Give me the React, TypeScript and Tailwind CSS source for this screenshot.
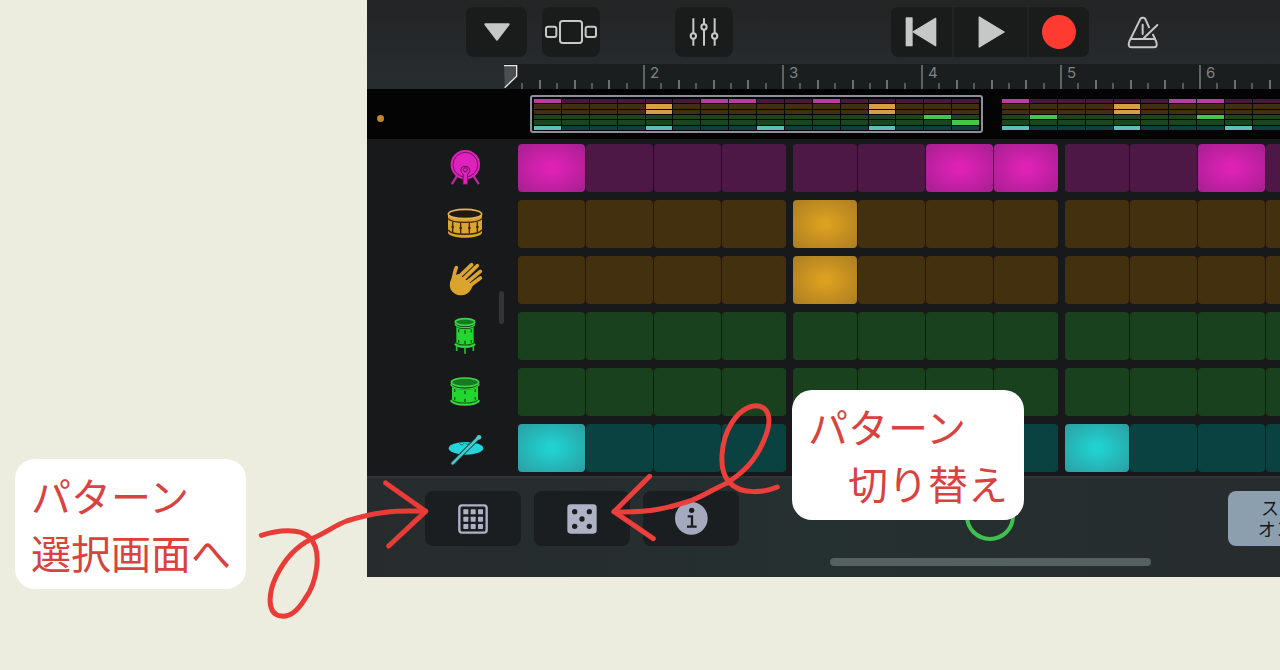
import React from 'react';
import clsx from 'clsx';

type Hue = 'pink' | 'amber' | 'green' | 'cyan';

const STEP_ON: Record<Hue, string> = {
  pink: 'bg-[radial-gradient(ellipse_at_center,#df22b6_10%,#a51f90_100%)]',
  amber: 'bg-[radial-gradient(ellipse_at_center,#dba020_10%,#ab7c22_100%)]',
  green: 'bg-[radial-gradient(ellipse_at_center,#2bd03a_10%,#229a2c_100%)]',
  cyan: 'bg-[radial-gradient(ellipse_at_center,#20d1d0_10%,#2c9da0_100%)]',
};

const STEP_OFF: Record<Hue, string> = {
  pink: 'bg-[#4e1846]',
  amber: 'bg-[#42300e]',
  green: 'bg-[#1a411d]',
  cyan: 'bg-[#0a4141]',
};

const MINI_ON: Record<Hue, string> = {
  pink: 'bg-[#bd3ba0]',
  amber: 'bg-[#d5a044]',
  green: 'bg-[#45c54c]',
  cyan: 'bg-[#5fbdba]',
};

const MINI_OFF: Record<Hue, string> = {
  pink: 'bg-[#421b3c]',
  amber: 'bg-[#452d12]',
  green: 'bg-[#1c441e]',
  cyan: 'bg-[#153c3e]',
};

const KickIcon = () => (
  <svg viewBox="-60 -60 120 120" className="size-10" fill="none">
    <path d="M-24 24L-38 46M26 24L40 46" stroke="#b6289f" strokeWidth="7" strokeLinecap="round" />
    <circle cx="1" cy="-10" r="44" fill="#df22bb" />
    <circle cx="1" cy="-10" r="37" stroke="#6b1560" strokeWidth="3" />
    <path d="M-6 49V18c-6-5-7-10-6-14 1-6 6-9 13-9s12 4 13 9c1 5-1 10-6 14v31z" fill="#df22bb" stroke="#5c1454" strokeWidth="3" />
    <circle cx="1" cy="5" r="6" fill="#df22bb" stroke="#5c1454" strokeWidth="3" />
  </svg>
);

const SnareIcon = () => (
  <svg viewBox="-60 -60 120 120" className="size-10" fill="none">
    <path d="M-51-30V26C-46 46 46 46 51 26V-30z" fill="#dba42d" />
    <ellipse cx="0" cy="-30" rx="50" ry="14" fill="#221b0d" stroke="#e0b65c" strokeWidth="5" />
    <path d="M-51-16C-38-1 38-1 51-16" stroke="#3d2606" strokeWidth="4" />
    <path d="M-51 18C-38 35 38 35 51 18" stroke="#3d2606" strokeWidth="4" />
    <path d="M-37-7V25M-13-4V29M13-4V29M37-7V25" stroke="#3d2606" strokeWidth="4" />
    <path d="M-37 9h.1M-13 12h.1M13 12h.1M37 9h.1" stroke="#3d2606" strokeWidth="8" strokeLinecap="round" />
  </svg>
);

const ClapIcon = () => (
  <svg viewBox="-60 -60 120 120" className="size-10" fill="none" stroke="#dba42d" strokeWidth="11" strokeLinecap="round">
    <path d="M-45 8C-41-5-32-15-20-18L24 16C17 33 7 46-10 46C-33 46-49 30-45 8z" fill="#dba42d" stroke="none" />
    <path d="M-38 6C-32-8-33-24-26-37M-22-6L20-46M-10 2L37-43M0 12L46-26M8 22L46-6" />
  </svg>
);

const TomIcon = () => (
  <svg viewBox="-60 -60 120 120" className="size-10" fill="none">
    <path d="M-26-28C-16-19 16-19 26-28V24C16 32-16 32-26 24z" fill="#22d52f" />
    <ellipse cx="0" cy="-42" rx="29" ry="10" fill="#157b20" stroke="#3ed548" strokeWidth="5" />
    <path d="M-30-35C-22-22 22-22 30-35" stroke="#3ed548" strokeWidth="4" />
    <path d="M-19-20v9M0-17v10M19-20v9M-19 20v-8M0 24v-10M19 20v-8" stroke="#0e5816" strokeWidth="4" />
    <path d="M-30 18C-22 30 22 30 30 18" stroke="#0e4914" strokeWidth="3" />
    <path d="M-30 23C-22 36 22 36 30 23" stroke="#3ed548" strokeWidth="6" />
    <path d="M-25 30v15M0 34v19M25 30v15" stroke="#2abb35" strokeWidth="5" />
  </svg>
);

const FloorTomIcon = () => (
  <svg viewBox="-60 -60 120 120" className="size-10" fill="none">
    <path d="M-39-16C-26-4 26-4 39-16V26C26 38-26 38-39 26z" fill="#22d52f" />
    <ellipse cx="0" cy="-29" rx="41" ry="13" fill="#157b20" stroke="#3ed548" strokeWidth="5" />
    <path d="M-43-23C-32-4 32-4 43-23" stroke="#3ed548" strokeWidth="4" />
    <path d="M-31-9v9M0-4v10M31-9v9M-31 24v-9M0 30v-10M31 24v-9" stroke="#0e5816" strokeWidth="4" />
    <path d="M-43 20C-32 38 32 38 43 20" stroke="#0e4914" strokeWidth="3" />
    <path d="M-43 25C-32 43 32 43 43 25" stroke="#3ed548" strokeWidth="6" />
  </svg>
);

const CymbalIcon = () => (
  <svg viewBox="-60 -60 120 120" className="size-10" fill="none" strokeLinecap="round">
    <ellipse cx="3" cy="1" rx="52" ry="19" fill="#25d4d8" />
    <path d="M-16-13c3 5 10 5 12 0M3-13c2 4 9 4 10-2" stroke="#12696c" strokeWidth="3" />
    <path d="M-37 46L42-33" stroke="#143336" strokeWidth="13" />
    <path d="M-37 46L42-33" stroke="#50c8cb" strokeWidth="8" />
    <circle cx="42" cy="-32" r="7" fill="#50c8cb" />
  </svg>
);

const TRACKS: { name: string; hue: Hue; on: number[]; icon: () => React.JSX.Element }[] = [
  { name: 'キック', hue: 'pink', on: [0, 6, 7, 10], icon: KickIcon },
  { name: 'スネア', hue: 'amber', on: [4, 12], icon: SnareIcon },
  { name: 'クラップ', hue: 'amber', on: [4, 12], icon: ClapIcon },
  { name: 'タム', hue: 'green', on: [14], icon: TomIcon },
  { name: 'フロアタム', hue: 'green', on: [15], icon: FloorTomIcon },
  { name: 'シンバル', hue: 'cyan', on: [0, 4, 8, 12], icon: CymbalIcon },
];

const SECOND_REGION = [[0, 6, 7, 10], [4, 12], [4, 12], [1, 7], [], [0, 4, 8, 12]];

const STEPS = Array.from({ length: 16 }, (_, i) => i);
const BARS = [1, 2, 3, 4, 5, 6];

// Steps next to a beat gap are a little narrower than the inner ones
const stepWidth = (step: number) =>
  step % 4 === 3 || (step % 4 === 0 && step > 0) ? 'w-16' : 'w-[67px]';

function MiniRegion({ rows, selected }: { rows: number[][]; selected?: boolean }) {
  return (
    <div
      className={clsx(
        'h-[38px] w-[453px] shrink-0 rounded-[3px] border-2 px-[2px] pt-[2px]',
        selected ? 'border-[#8e8f98]' : 'border-transparent',
      )}
    >
      <div className="grid h-[31px] gap-px">
        {rows.map((on, r) => (
          <div key={r} className="grid grid-cols-16 gap-px">
            {STEPS.map((s) => (
              <div key={s} className={on.includes(s) ? MINI_ON[TRACKS[r].hue] : MINI_OFF[TRACKS[r].hue]} />
            ))}
          </div>
        ))}
      </div>
    </div>
  );
}

function Toolbar() {
  return (
    <div className="flex h-16 items-center overflow-hidden pl-[99px]">
      <button aria-label="メニュー" className="flex h-[50px] w-[61px] shrink-0 items-center justify-center rounded-lg bg-[#1a1c1c]">
        <svg viewBox="0 0 78 54" className="h-[18px] w-[26px]">
          <path d="M4 4H74L39 50z" fill="#c6c8c8" stroke="#c6c8c8" strokeWidth="6" strokeLinejoin="round" />
        </svg>
      </button>
      <button aria-label="トラック" className="ml-[15px] flex h-[50px] w-[58px] shrink-0 items-center justify-center rounded-lg bg-[#1a1c1c]">
        <svg viewBox="0 0 156 72" className="h-6 w-[52px]" fill="none" stroke="#c6c8c8" strokeWidth="6">
          <rect x="3" y="20" width="31" height="31" rx="6" />
          <rect x="45" y="3" width="66" height="66" rx="8" />
          <rect x="122" y="20" width="31" height="31" rx="6" />
        </svg>
      </button>
      <button aria-label="ミキサー" className="ml-[75px] flex h-[50px] w-[58px] shrink-0 items-center justify-center rounded-lg bg-[#1a1c1c]">
        <svg viewBox="0 0 90 84" className="h-7 w-[30px]" fill="#1a1c1c" stroke="#c6c8c8" strokeWidth="6">
          <path d="M13 1V83M45 1V83M77 1V83" />
          <circle cx="13" cy="54" r="8" />
          <circle cx="45" cy="27" r="8" />
          <circle cx="77" cy="54" r="8" />
        </svg>
      </button>
      <div className="ml-[158px] flex h-[50px] shrink-0 gap-[2px] overflow-hidden rounded-lg bg-[#202223]">
        <button aria-label="先頭へ" className="flex w-[61px] items-center justify-center bg-[#1a1c1c]">
          <svg viewBox="0 0 102 90" className="h-[30px] w-[34px]" fill="#c6c8c8">
            <path d="M2 3q0-2 2-2h16q3 0 3 2V86q0 2-3 2H4q-2 0-2-2z" />
            <path d="M25 44.500L92 4V86z" stroke="#c6c8c8" strokeWidth="4" strokeLinejoin="round" />
          </svg>
        </button>
        <button aria-label="再生" className="flex w-[73px] items-center justify-center bg-[#1a1c1c]">
          <svg viewBox="0 0 84 98" className="h-8 w-7" fill="#c6c8c8" stroke="#c6c8c8" strokeWidth="4" strokeLinejoin="round">
            <path d="M6 3V95L82 49z" />
          </svg>
        </button>
        <button aria-label="録音" className="flex w-[60px] items-center justify-center bg-[#1a1c1c]">
          <span className="size-[34px] rounded-full bg-[#ff3b31]" />
        </button>
      </div>
      <button aria-label="メトロノーム" className="ml-[34px] flex size-10 shrink-0 items-center justify-center">
        <svg viewBox="0 0 96 99" className="h-[33px] w-8" fill="none" stroke="#c6c8c8" strokeWidth="6" strokeLinecap="round" strokeLinejoin="round">
          <path d="M66 34L57 13Q54 5 49 5H46Q41 5 38 13L7 76Q1 94 14 94H80Q93 94 88 78L78 56" />
          <path d="M11 69H84M47 26V54M91 27L50 67" />
        </svg>
      </button>
    </div>
  );
}

function Ruler() {
  return (
    <div className="flex h-[25px] overflow-hidden pl-[137px]">
      <div className="relative flex flex-1 overflow-hidden bg-[#1b1e1f]">
        {BARS.map((bar) => (
          <div key={bar} className="relative flex w-[139px] shrink-0 items-end">
            {Array.from({ length: 8 }, (_, t) => (
              <div
                key={t}
                className={clsx(
                  'flex-1 border-l-2',
                  t === 0 && 'h-6 border-[#5f6364]',
                  t % 2 === 1 && 'h-[6px] border-[#55595a]',
                  t > 0 && t % 2 === 0 && 'h-[9px] border-[#6c7071]',
                )}
              />
            ))}
            {bar > 1 && (
              <span className="absolute top-0 left-[7px] font-['Inter','Liberation_Sans',sans-serif] text-[15px] leading-[18px] text-[#7f8384]">{bar}</span>
            )}
          </div>
        ))}
        <svg viewBox="0 0 42 75" className="absolute top-0 left-0 h-[25px] w-[14px]">
          <path d="M0 0H42V42L6 75H0z" fill="#1b1e1f" />
          <path d="M0 5H38V37L2 71" fill="#4a4e50" stroke="#e4e5e5" strokeWidth="4" />
        </svg>
      </div>
    </div>
  );
}

function Sequencer() {
  return (
    <div className="flex overflow-hidden bg-[#18191b] pt-[5px] pb-1">
      <div className="relative flex w-[151px] shrink-0 flex-col gap-2 pl-[45px]">
        {TRACKS.map(({ name, icon: Icon }) => (
          <button key={name} aria-label={name} className="flex h-12 items-center justify-center">
            <Icon />
          </button>
        ))}
        <div className="absolute top-[147px] right-[14px] h-[33px] w-[5px] rounded-full bg-[#343537]" />
      </div>
      <div className="flex flex-col gap-2">
        {TRACKS.map(({ name, hue, on }) => (
          <div key={name} className="flex h-12 gap-[7px]">
            {[0, 4, 8, 12].map((beat) => (
              <div key={beat} className="flex shrink-0 gap-px">
                {STEPS.slice(beat, beat + 4).map((s) => (
                  <button
                    key={s}
                    aria-label={`${name} ${s + 1}`}
                    aria-pressed={on.includes(s)}
                    className={clsx('h-12 shrink-0 rounded-[4px]', stepWidth(s), on.includes(s) ? STEP_ON[hue] : STEP_OFF[hue])}
                  />
                ))}
              </div>
            ))}
          </div>
        ))}
      </div>
    </div>
  );
}

function BottomBar() {
  return (
    <div className="relative h-[101px] overflow-hidden border-t-2 border-[#303435] bg-linear-to-r from-[#272b2d] via-[#253030] to-[#272c2f]">
      <div className="flex gap-[13px] pt-[13px] pl-[58px]">
        <button aria-label="パターン一覧" className="flex h-[55px] w-24 shrink-0 items-center justify-center rounded-lg bg-[#1a1e20]">
          <svg viewBox="0 0 90 90" className="size-[30px]" fill="#afb2c5">
            <rect x="4" y="4" width="82" height="82" rx="8" fill="none" stroke="#afb2c5" strokeWidth="7" />
            {[16, 38, 60].map((y) => [16, 38, 60].map((x) => <rect key={`${x}-${y}`} x={x} y={y} width="15" height="15" rx="2" />))}
          </svg>
        </button>
        <button aria-label="パターン切り替え" className="flex h-[55px] w-24 shrink-0 items-center justify-center rounded-lg bg-[#1a1e20]">
          <svg viewBox="0 0 90 90" className="size-[30px]" fill="#1a1e20">
            <rect x="1" y="1" width="88" height="88" rx="10" fill="#afb2c5" />
            <circle cx="23" cy="23" r="8" />
            <circle cx="67" cy="23" r="8" />
            <circle cx="45" cy="45" r="8" />
            <circle cx="23" cy="67" r="8" />
            <circle cx="67" cy="67" r="8" />
          </svg>
        </button>
        <button aria-label="情報" className="flex h-[55px] w-24 shrink-0 items-center justify-center rounded-lg bg-[#1a1e20]">
          <svg viewBox="0 0 99 99" className="size-[33px]" fill="none">
            <circle cx="49" cy="49" r="49" fill="#a5a9bd" />
            <circle cx="50" cy="25" r="8" fill="#1a1e20" />
            <path d="M38 43H51V73M36 74H65" stroke="#1a1e20" strokeWidth="7" />
          </svg>
        </button>
        <div className="ml-[213px] size-[50px] shrink-0 rounded-full border-4 border-[#3fc150]" />
        <button className="ml-[200px] h-[55px] w-[138px] shrink-0 rounded-lg bg-[#8c9fae] text-center text-lg leading-[21px] text-[#12181d]">
          ステップ
          <br />
          オン/オフ
        </button>
      </div>
      <div className="absolute bottom-[11px] left-[463px] h-2 w-[321px] rounded-full bg-[#556061]" />
    </div>
  );
}

export default function App() {
  return (
    <div className="flex min-h-screen items-start overflow-hidden bg-[#ededdf] font-['Noto_Sans','Noto_Sans_CJK_JP',sans-serif]">
      <aside className="relative z-10 w-[367px] shrink-0 pt-[459px] pl-[15px]">
        <p className="w-[231px] rounded-[20px] bg-white px-4 py-2 font-['Noto_Sans_CJK_JP',sans-serif] text-[40px] leading-[57px] whitespace-nowrap text-[#d8423f]">
          パターン
          <br />
          選択画面へ
        </p>
        <svg
          viewBox="768 78 528 438"
          className="absolute top-[476px] left-64 h-[146px] w-44"
          fill="none"
          stroke="#e93b38"
          strokeWidth="15"
          strokeLinecap="round"
          strokeLinejoin="round"
        >
          <path d="M784 256C830 241 900 232 929 263C970 303 949 402 914 448C887 491 866 501 844 498C801 495 803 432 829 378C859 317 900 283 936 266C978 248 1005 226 1040 213C1120 187 1180 180 1277 184" />
          <path d="M1157 99L1277 184L1166 288" />
        </svg>
      </aside>

      <main className="relative min-w-0 flex-1">
        <div className="overflow-hidden">
          <div className="bg-linear-to-b from-[#232424] to-[#282d30]">
            <Toolbar />
            <Ruler />
          </div>
          <div className="flex h-[50px] items-start overflow-hidden bg-[#040404] pt-[6px]">
            <span className="mt-5 ml-[10px] size-[7px] shrink-0 rounded-full bg-[#c4862b]" />
            <div className="ml-[146px] flex gap-[15px]">
              <MiniRegion rows={TRACKS.map((t) => t.on)} selected />
              <MiniRegion rows={SECOND_REGION} />
            </div>
          </div>
          <Sequencer />
          <BottomBar />
        </div>

        <p className="absolute top-[390px] left-[425px] w-[232px] rounded-[20px] bg-white px-4 py-2 font-['Noto_Sans_CJK_JP',sans-serif] text-[40px] leading-[57px] whitespace-pre text-[#d8423f]">
          パターン
          <br />
          {'\u3000切り替え'}
        </p>
        <svg
          viewBox="552 24 540 456"
          className="absolute top-[398px] left-[237px] h-[152px] w-[180px]"
          fill="none"
          stroke="#ec3f3c"
          strokeWidth="15"
          strokeLinecap="round"
          strokeLinejoin="round"
        >
          <path d="M1072 291C1040 305 965 319 927 276C893 239 903 151 934 101C964 51 1005 38 1031 54C1061 78 1043 132 1019 178C990 231 956 255 922 279C888 293 850 318 815 331C750 352 690 370 582 365" />
          <path d="M689 259L582 365L700 446" />
        </svg>
      </main>
    </div>
  );
}
